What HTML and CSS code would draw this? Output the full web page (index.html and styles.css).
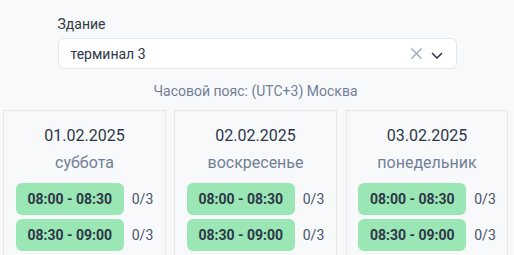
FILE: index.html
```html
<!DOCTYPE html>
<html lang="ru">
<head>
<meta charset="utf-8">
<link rel="stylesheet" href="styles.css">
</head>
<body>
<div class="page">
  <div class="form">
    <label class="label">Здание</label>
    <div class="select">
      <span class="select-value">терминал 3</span>
      <span class="select-icons">
        <svg class="icon-clear" width="11" height="11" viewBox="0 0 11 11"><path d="M0.5 0.5L10.5 10.5M10.5 0.5L0.5 10.5" stroke="#a0aec0" stroke-width="1.5" fill="none"/></svg>
        <svg class="icon-chevron" width="12" height="7" viewBox="0 0 12 7"><path d="M1 1L6 6L11 1" stroke="#2d3748" stroke-width="1.5" fill="none"/></svg>
      </span>
    </div>
  </div>
  <div class="tz">Часовой пояс: (UTC+3) Москва</div>
  <div class="days">
    <div class="day">
      <div class="date">01.02.2025</div>
      <div class="weekday">суббота</div>
      <div class="slots">
        <div class="slot-row"><span class="slot">08:00 - 08:30</span><span class="count">0/3</span></div>
        <div class="slot-row"><span class="slot">08:30 - 09:00</span><span class="count">0/3</span></div>
      </div>
    </div>
    <div class="day">
      <div class="date">02.02.2025</div>
      <div class="weekday">воскресенье</div>
      <div class="slots">
        <div class="slot-row"><span class="slot">08:00 - 08:30</span><span class="count">0/3</span></div>
        <div class="slot-row"><span class="slot">08:30 - 09:00</span><span class="count">0/3</span></div>
      </div>
    </div>
    <div class="day">
      <div class="date">03.02.2025</div>
      <div class="weekday">понедельник</div>
      <div class="slots">
        <div class="slot-row"><span class="slot">08:00 - 08:30</span><span class="count">0/3</span></div>
        <div class="slot-row"><span class="slot">08:30 - 09:00</span><span class="count">0/3</span></div>
      </div>
    </div>
  </div>
</div>
</body>
</html>
```

FILE: styles.css
```css
html, body {
  margin: 0;
  padding: 0;
  background: #f8f9fb;
  font-family: Roboto, "Liberation Sans", sans-serif;
  color: #2d3748;
  overflow: hidden;
}
.page {
  padding-top: 14px;
}
.form {
  width: 399px;
  margin: 0 auto;
  display: flex;
  flex-direction: column;
}
.label {
  font-size: 14px;
  line-height: 20px;
  color: #333a45;
  margin-bottom: 4px;
}
.select {
  height: 31px;
  box-sizing: border-box;
  background: #fff;
  border: 1px solid #e2e8f0;
  border-radius: 6px;
  display: flex;
  align-items: center;
  justify-content: space-between;
  padding: 0 13px 0 12px;
}
.select-value {
  font-size: 14px;
  color: #2d3748;
}
.select-icons {
  display: flex;
  align-items: center;
  gap: 9px;
}
.icon-clear {
  display: block;
}
.icon-chevron {
  display: block;
  margin-top: 4px;
}
.tz {
  text-align: center;
  font-size: 14px;
  line-height: 20px;
  color: #718096;
  margin-top: 12px;
  padding-right: 3px;
}
.days {
  display: grid;
  grid-template-columns: repeat(3, 163px);
  column-gap: 8px;
  padding: 0 0 0 3px;
  margin-top: 9px;
}
.day {
  box-sizing: border-box;
  border: 1px solid #e2e8f0;
  border-bottom: none;
  height: 160px;
  padding-top: 13px;
  display: flex;
  flex-direction: column;
  align-items: center;
}
.day + .day + .day {
  margin-left: 1px;
}
.date {
  font-size: 16px;
  line-height: 24px;
  color: #2d3748;
}
.weekday {
  font-size: 16px;
  line-height: 24px;
  color: #718096;
  margin-top: 3px;
}
.slots {
  margin-top: 8px;
  display: flex;
  flex-direction: column;
  gap: 4px;
}
.slot-row {
  display: flex;
  align-items: center;
  gap: 8px;
}
.slot {
  background: #9ae6b4;
  border-radius: 6px;
  height: 32px;
  width: 108px;
  box-sizing: border-box;
  display: flex;
  align-items: center;
  justify-content: center;
  font-weight: 700;
  font-size: 14px;
  color: #2d3748;
}
.count {
  font-size: 14px;
  color: #4a5568;
}
```
